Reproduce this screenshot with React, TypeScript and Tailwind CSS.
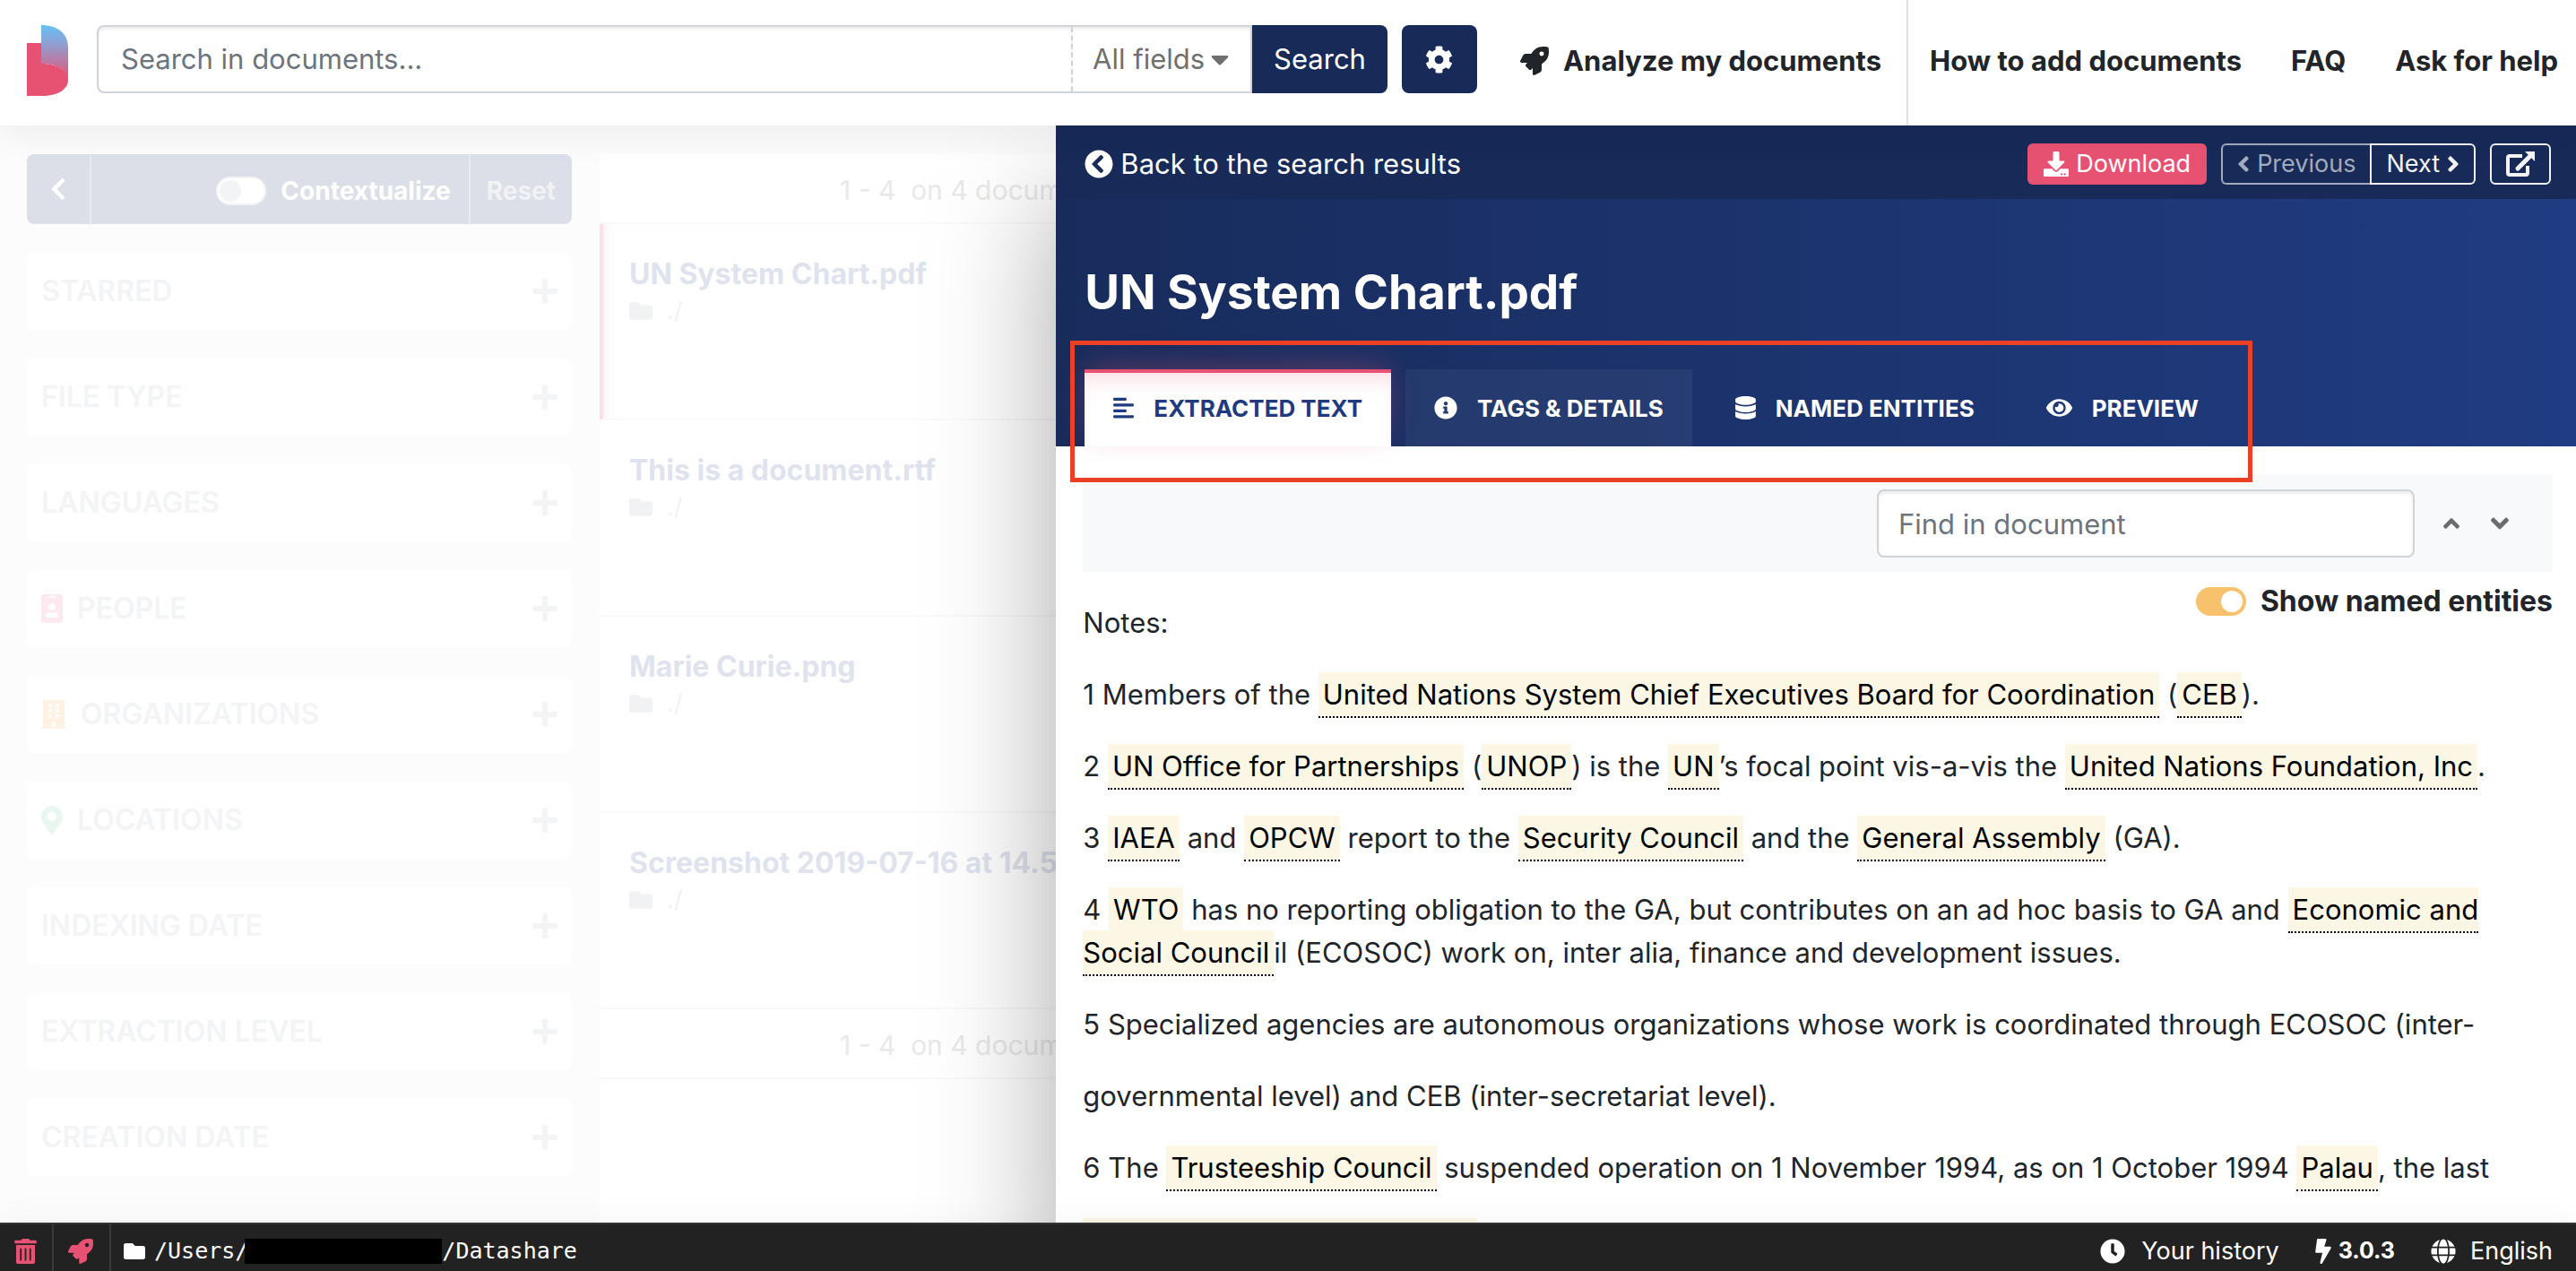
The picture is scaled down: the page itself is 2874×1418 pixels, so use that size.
import type { ReactNode } from "react";
import {
  FaAlignLeft,
  FaAngleDown,
  FaAngleLeft,
  FaAngleRight,
  FaAngleUp,
  FaBolt,
  FaBuilding,
  FaCaretDown,
  FaChevronCircleLeft,
  FaChevronLeft,
  FaClock,
  FaCog,
  FaDatabase,
  FaDownload,
  FaEye,
  FaFolder,
  FaGlobe,
  FaIdBadge,
  FaInfoCircle,
  FaMapMarkerAlt,
  FaPlus,
  FaRocket,
  FaTrashAlt,
} from "react-icons/fa";

function Logo() {
  return (
    <svg viewBox="0 0 46 80" className="h-20 w-[46px] shrink-0" role="img" aria-label="Datashare">
      <defs>
        <linearGradient id="logo-fade" x1="0" y1="0" x2="0" y2="1">
          <stop offset="0" stopColor="#66c0f6" />
          <stop offset="0.35" stopColor="#8f9fd0" />
          <stop offset="1" stopColor="#e85272" />
        </linearGradient>
      </defs>
      <path d="M0 20H16V43C33 43 46 50 46 61C46 72 34 79 17 79H0Z" fill="#e85272" />
      <path d="M16 0C34 0 46 9 46 25V61C44 50 33 43 16 43Z" fill="url(#logo-fade)" />
    </svg>
  );
}

function Header() {
  return (
    <header className="relative z-20 flex h-[140px] shrink-0 bg-white shadow-[0_16px_32px_rgba(0,0,0,0.05)]">
      <div className="flex w-[57.34%] shrink-0 items-start pt-7 pl-[30px]">
        <a href="#home">
          <Logo />
        </a>
        <form className="ml-8 flex h-[76px] min-w-0 flex-1" onSubmit={(e) => e.preventDefault()}>
          <input
            type="text"
            aria-label="Search in documents"
            placeholder="Search in documents..."
            className="min-w-0 flex-1 rounded-l-lg border-2 border-r-0 border-[#ced4da] px-[25px] text-[31px] shadow-[inset_0_3px_3px_rgba(0,0,0,0.07)] placeholder:text-[#6c757d]"
          />
          <div className="flex items-center border-y-2 border-r-2 border-[#ced4da] shadow-[inset_0_3px_3px_rgba(0,0,0,0.07)]">
            <div className="flex h-full items-center border-l-2 border-dashed border-[#ced4da] pr-6 pl-[22px] text-[#6f6f6f]">
              <select aria-label="Search field" className="h-full w-[132px] appearance-none bg-transparent text-[31px]">
                <option>All fields</option>
              </select>
              <FaCaretDown className="h-8 w-5" />
            </div>
          </div>
          <button type="submit" className="rounded-r-lg bg-[#172a58] px-6 text-[31px] text-white">
            Search
          </button>
          <button type="button" aria-label="Settings" className="ml-4 flex w-[84px] items-center justify-center rounded-lg bg-[#172a58] text-white">
            <FaCog className="size-[31px]" />
          </button>
        </form>
      </div>
      <nav className="flex flex-1 pb-1 text-[31px] font-bold whitespace-nowrap text-[#212529]">
        <a href="#analyze" className="-mb-1 flex items-center gap-4 border-r-2 border-[#dee2e6] pr-7 pb-1 pl-12">
          <FaRocket className="size-8" />
          Analyze my documents
        </a>
        <div className="flex flex-1 items-center justify-between pr-5 pl-6">
          <a href="#how-to">How to add documents</a>
          <a href="#faq">FAQ</a>
          <a href="#help">Ask for help</a>
        </div>
      </nav>
    </header>
  );
}

const filters: { name: string; icon?: ReactNode }[] = [
  { name: "STARRED" },
  { name: "FILE TYPE" },
  { name: "LANGUAGES" },
  { name: "PEOPLE", icon: <FaIdBadge className="h-8 w-6 text-[#fde9ef]" /> },
  { name: "ORGANIZATIONS", icon: <FaBuilding className="h-8 w-7 text-[#fff2e2]" /> },
  { name: "LOCATIONS", icon: <FaMapMarkerAlt className="h-8 w-6 text-[#e8f8f1]" /> },
  { name: "INDEXING DATE" },
  { name: "EXTRACTION LEVEL" },
  { name: "CREATION DATE" },
];

function Filters() {
  return (
    <aside className="ml-[30px] flex w-[608px] shrink-0 flex-col gap-8 pt-8">
      <div className="flex h-[78px] shrink-0 overflow-hidden rounded-lg bg-[#dcdfe7] text-[28px] font-bold text-white">
        <button type="button" aria-label="Hide filters" className="flex w-[72px] items-center justify-center border-r-2 border-[#e8eaef]">
          <FaChevronLeft className="h-7 w-[18px]" />
        </button>
        <label className="flex flex-1 items-center justify-end gap-4 border-r-2 border-[#e8eaef] pt-1 pr-5">
          <input
            type="checkbox"
            className="h-8 w-14 appearance-none rounded-full border-2 border-[#f3f4f6] bg-white before:m-0.5 before:block before:size-6 before:rounded-full before:bg-[#f3f4f6]"
          />
          Contextualize
        </label>
        <button type="button" className="px-[18px] pt-1 text-[#f1f2f5]">
          Reset
        </button>
      </div>
      {filters.map((f) => (
        <button
          key={f.name}
          type="button"
          className="flex h-[86px] shrink-0 items-center gap-4 rounded-lg bg-white px-4 text-[32px] font-semibold text-[#f3f4f6]"
        >
          {f.icon}
          {f.name}
          <FaPlus className="ml-auto h-8 w-7" />
        </button>
      ))}
    </aside>
  );
}

const documents = ["UN System Chart.pdf", "This is a document.rtf", "Marie Curie.png", "Screenshot 2019-07-16 at 14.54.10.png"];

function Pagination() {
  return (
    <div className="flex h-[78px] items-center border-b-2 border-[#f9f9f9] pt-1 pl-[268px] text-[30px] whitespace-pre text-[#e9e9e9]">
      1 - 4  on 4 documents
    </div>
  );
}

function Results() {
  return (
    <section className="ml-[31px] min-w-0 flex-1 overflow-hidden pt-8">
      <div className="h-full bg-white">
        <Pagination />
        <ul>
          {documents.map((name, i) => (
            <li
              key={name}
              className={
                i === 0
                  ? "h-[219px] border-b-2 border-l-4 border-b-[#f9f9f9] border-l-[#fde0e7] pt-8 pl-[29px] shadow-[inset_16px_0_16px_-12px_#fef3f6]"
                  : "h-[219px] border-b-2 border-[#f9f9f9] pt-8 pl-[33px]"
              }
            >
              <a href="#document" className="block text-[32px] leading-[48px] font-bold whitespace-nowrap text-[#dfe3ee]">
                {name}
              </a>
              <p className="flex items-center gap-4 text-[27px] leading-[34px] text-[#f1f2f4]">
                <FaFolder className="size-[26px]" />
                ./
              </p>
            </li>
          ))}
        </ul>
        <Pagination />
      </div>
    </section>
  );
}

function Tab({ icon, children, state }: { icon: ReactNode; children: ReactNode; state?: "active" | "hover" }) {
  const look =
    state === "active"
      ? "border-[#e85272] bg-white text-[#1f3a80] shadow-[0_-8px_32px_-4px_rgba(232,82,114,0.3),inset_0_16px_24px_-12px_rgba(232,82,114,0.25)]"
      : state === "hover"
        ? "border-transparent bg-white/5 bg-clip-border text-white"
        : "border-transparent text-white";
  return (
    <button
      type="button"
      role="tab"
      aria-selected={state === "active"}
      className={`flex h-[86px] items-center gap-[22px] border-t-4 px-8 pb-1 text-[26px] font-bold ${look}`}
    >
      {icon}
      {children}
    </button>
  );
}

function Entity({ children }: { children: ReactNode }) {
  return (
    <mark className="border-b-2 border-dotted border-black bg-[#fbf7e4] px-[5px] py-1.5 text-black">{children}</mark>
  );
}

function DocumentText() {
  return (
    <article className="space-y-8 pt-[33px] text-[31px] leading-[48px] text-[#212529]">
      <p>Notes:</p>
      <p>
        1 Members of the <Entity>United Nations System Chief Executives Board for Coordination</Entity> (<Entity>CEB</Entity>).
      </p>
      <p>
        2 <Entity>UN Office for Partnerships</Entity> (<Entity>UNOP</Entity>) is the <Entity>UN</Entity>’s focal point vis-a-vis the{" "}
        <Entity>United Nations Foundation, Inc</Entity>.
      </p>
      <p>
        3 <Entity>IAEA</Entity> and <Entity>OPCW</Entity> report to the <Entity>Security Council</Entity> and the{" "}
        <Entity>General Assembly</Entity> (GA).
      </p>
      <p>
        4 <Entity>WTO</Entity> has no reporting obligation to the GA, but contributes on an ad hoc basis to GA and{" "}
        <Entity>Economic and Social Council</Entity>il (ECOSOC) work on, inter alia, finance and development issues.
      </p>
      <p>5 Specialized agencies are autonomous organizations whose work is coordinated through ECOSOC (inter-</p>
      <p>governmental level) and CEB (inter-secretariat level).</p>
      <p>
        6 The <Entity>Trusteeship Council</Entity> suspended operation on 1 November 1994, as on 1 October 1994{" "}
        <Entity>Palau</Entity>, the last
      </p>
      <div className="h-12 w-[440px] bg-[#fbf7e4]" />
    </article>
  );
}

function DocumentPanel() {
  return (
    <section className="relative z-10 flex w-[59%] shrink-0 flex-col bg-white shadow-[0_80px_128px_rgba(0,0,0,0.35)]">
      <div className="flex h-[82px] shrink-0 items-center gap-4 bg-[#172a58] pt-1 pr-7 pl-8 text-white">
        <a href="#results" className="mr-auto flex items-center gap-2 text-[31px]">
          <FaChevronCircleLeft className="size-8" />
          Back to the search results
        </a>
        <button type="button" className="flex h-[46px] items-center gap-2 rounded-md bg-[#e85272] px-[18px] text-[27px]">
          <FaDownload className="size-7" />
          Download
        </button>
        <div className="flex h-[46px] text-[27px]">
          <button
            type="button"
            disabled
            className="flex items-center gap-2 rounded-l-md border-2 border-r-0 border-[#a2aabc] px-4 text-[#a2aabc]"
          >
            <FaAngleLeft className="h-7 w-[14px]" />
            Previous
          </button>
          <button type="button" className="flex items-center gap-2 rounded-r-md border-2 border-[#f3f3f3] px-4 text-[#f3f3f3]">
            Next
            <FaAngleRight className="h-7 w-[14px]" />
          </button>
        </div>
        <button
          type="button"
          aria-label="Open in a new window"
          className="flex h-[46px] w-[68px] items-center justify-center rounded-md border-2 border-[#f3f3f3] text-[#f3f3f3]"
        >
          <svg viewBox="0 0 32 28" className="h-7 w-8" fill="none" stroke="currentColor" strokeWidth="4">
            <path d="M18 5H4a2 2 0 0 0-2 2v17a2 2 0 0 0 2 2h18a2 2 0 0 0 2-2v-8" />
            <path d="M13 19 28 4" strokeWidth="5" strokeLinecap="round" />
            <path d="M21 0h11v11Z" fill="currentColor" stroke="none" />
          </svg>
        </button>
      </div>
      <div className="shrink-0 bg-linear-to-r from-[#182c5c] to-[#203c82] pt-[72px] pl-8">
        <h1 className="text-[53px] leading-[64px] font-bold text-white">UN System Chart.pdf</h1>
        <div className="relative mt-[54px] w-fit">
          <div role="tablist" className="flex gap-4 whitespace-nowrap">
            <Tab state="active" icon={<FaAlignLeft className="h-[26px] w-[23px]" />}>
              EXTRACTED TEXT
            </Tab>
            <Tab state="hover" icon={<FaInfoCircle className="size-[26px]" />}>
              TAGS &amp; DETAILS
            </Tab>
            <Tab icon={<FaDatabase className="h-[26px] w-[23px]" />}>NAMED ENTITIES</Tab>
            <Tab icon={<FaEye className="h-[26px] w-[29px]" />}>PREVIEW</Tab>
          </div>
          <div className="pointer-events-none absolute -top-8 -right-7 -bottom-10 -left-4 z-10 border-5 border-[#ea4025]" />
        </div>
      </div>
      <div className="min-h-0 flex-1 overflow-hidden pt-8 pr-[26px] pl-[30px]">
        <div className="flex justify-end bg-[#f8f9fb] py-4 pr-8">
          <input
            type="search"
            aria-label="Find in document"
            placeholder="Find in document"
            className="mr-[14px] h-[76px] w-[600px] rounded-lg border-2 border-[#ced4da] bg-white px-[22px] text-[31px] shadow-[inset_0_3px_3px_rgba(0,0,0,0.07)] placeholder:text-[#6c757d]"
          />
          <button type="button" aria-label="Previous occurrence" className="flex w-[54px] items-center justify-center text-[#6c6c6c]">
            <FaAngleUp className="h-8 w-[18px]" />
          </button>
          <button type="button" aria-label="Next occurrence" className="flex w-[54px] items-center justify-center text-[#6c6c6c]">
            <FaAngleDown className="h-8 w-5" />
          </button>
        </div>
        <label className="float-right mt-[9px] flex items-center gap-4 text-[32px] leading-[48px] font-bold text-[#212529]">
          <input
            type="checkbox"
            defaultChecked
            className="flex h-8 w-14 appearance-none items-center justify-end rounded-full bg-[#f7c26b] pr-1 before:block before:size-6 before:rounded-full before:bg-white"
          />
          Show named entities
        </label>
        <DocumentText />
      </div>
    </section>
  );
}

function Footer() {
  return (
    <footer className="relative z-20 flex h-[54px] shrink-0 items-stretch border-t-2 border-[#333] bg-[#222] text-[27px] text-white shadow-[0_-8px_32px_rgba(0,0,0,0.03)]">
      <button type="button" aria-label="Delete index" className="flex w-[60px] items-center border-r-2 border-[#3a3a3a] pt-2 pl-4 text-[#e85272]">
        <FaTrashAlt className="h-7 w-[25px]" />
      </button>
      <button type="button" aria-label="Run tasks" className="flex w-16 items-center border-r-2 border-[#3a3a3a] pt-2 pl-4 text-[#e85272]">
        <FaRocket className="size-7" />
      </button>
      <p className="flex items-center pt-2 pl-[14px] font-['DejaVu_Sans_Mono',monospace] text-[25px]">
        <FaFolder className="mr-2.5 size-6" />
        /Users/
        <span className="-ml-1 h-7 w-[220px] bg-black" />
        /Datashare
      </p>
      <div className="ml-auto flex items-center gap-10 pt-2 pr-[26px]">
        <a href="#history" className="flex items-center gap-[18px]">
          <FaClock className="size-7" />
          Your history
        </a>
        <span className="flex items-center gap-2 text-[25px] font-bold">
          <FaBolt className="h-7 w-[18px]" />
          3.0.3
        </span>
        <button type="button" className="flex items-center gap-4">
          <FaGlobe className="size-7" />
          English
        </button>
      </div>
    </footer>
  );
}

export default function App() {
  return (
    <div className="flex h-screen flex-col overflow-hidden bg-[#fcfcfc] font-[Inter,sans-serif]">
      <Header />
      <main className="flex min-h-0 flex-1 overflow-hidden">
        <Filters />
        <Results />
        <DocumentPanel />
      </main>
      <Footer />
    </div>
  );
}
